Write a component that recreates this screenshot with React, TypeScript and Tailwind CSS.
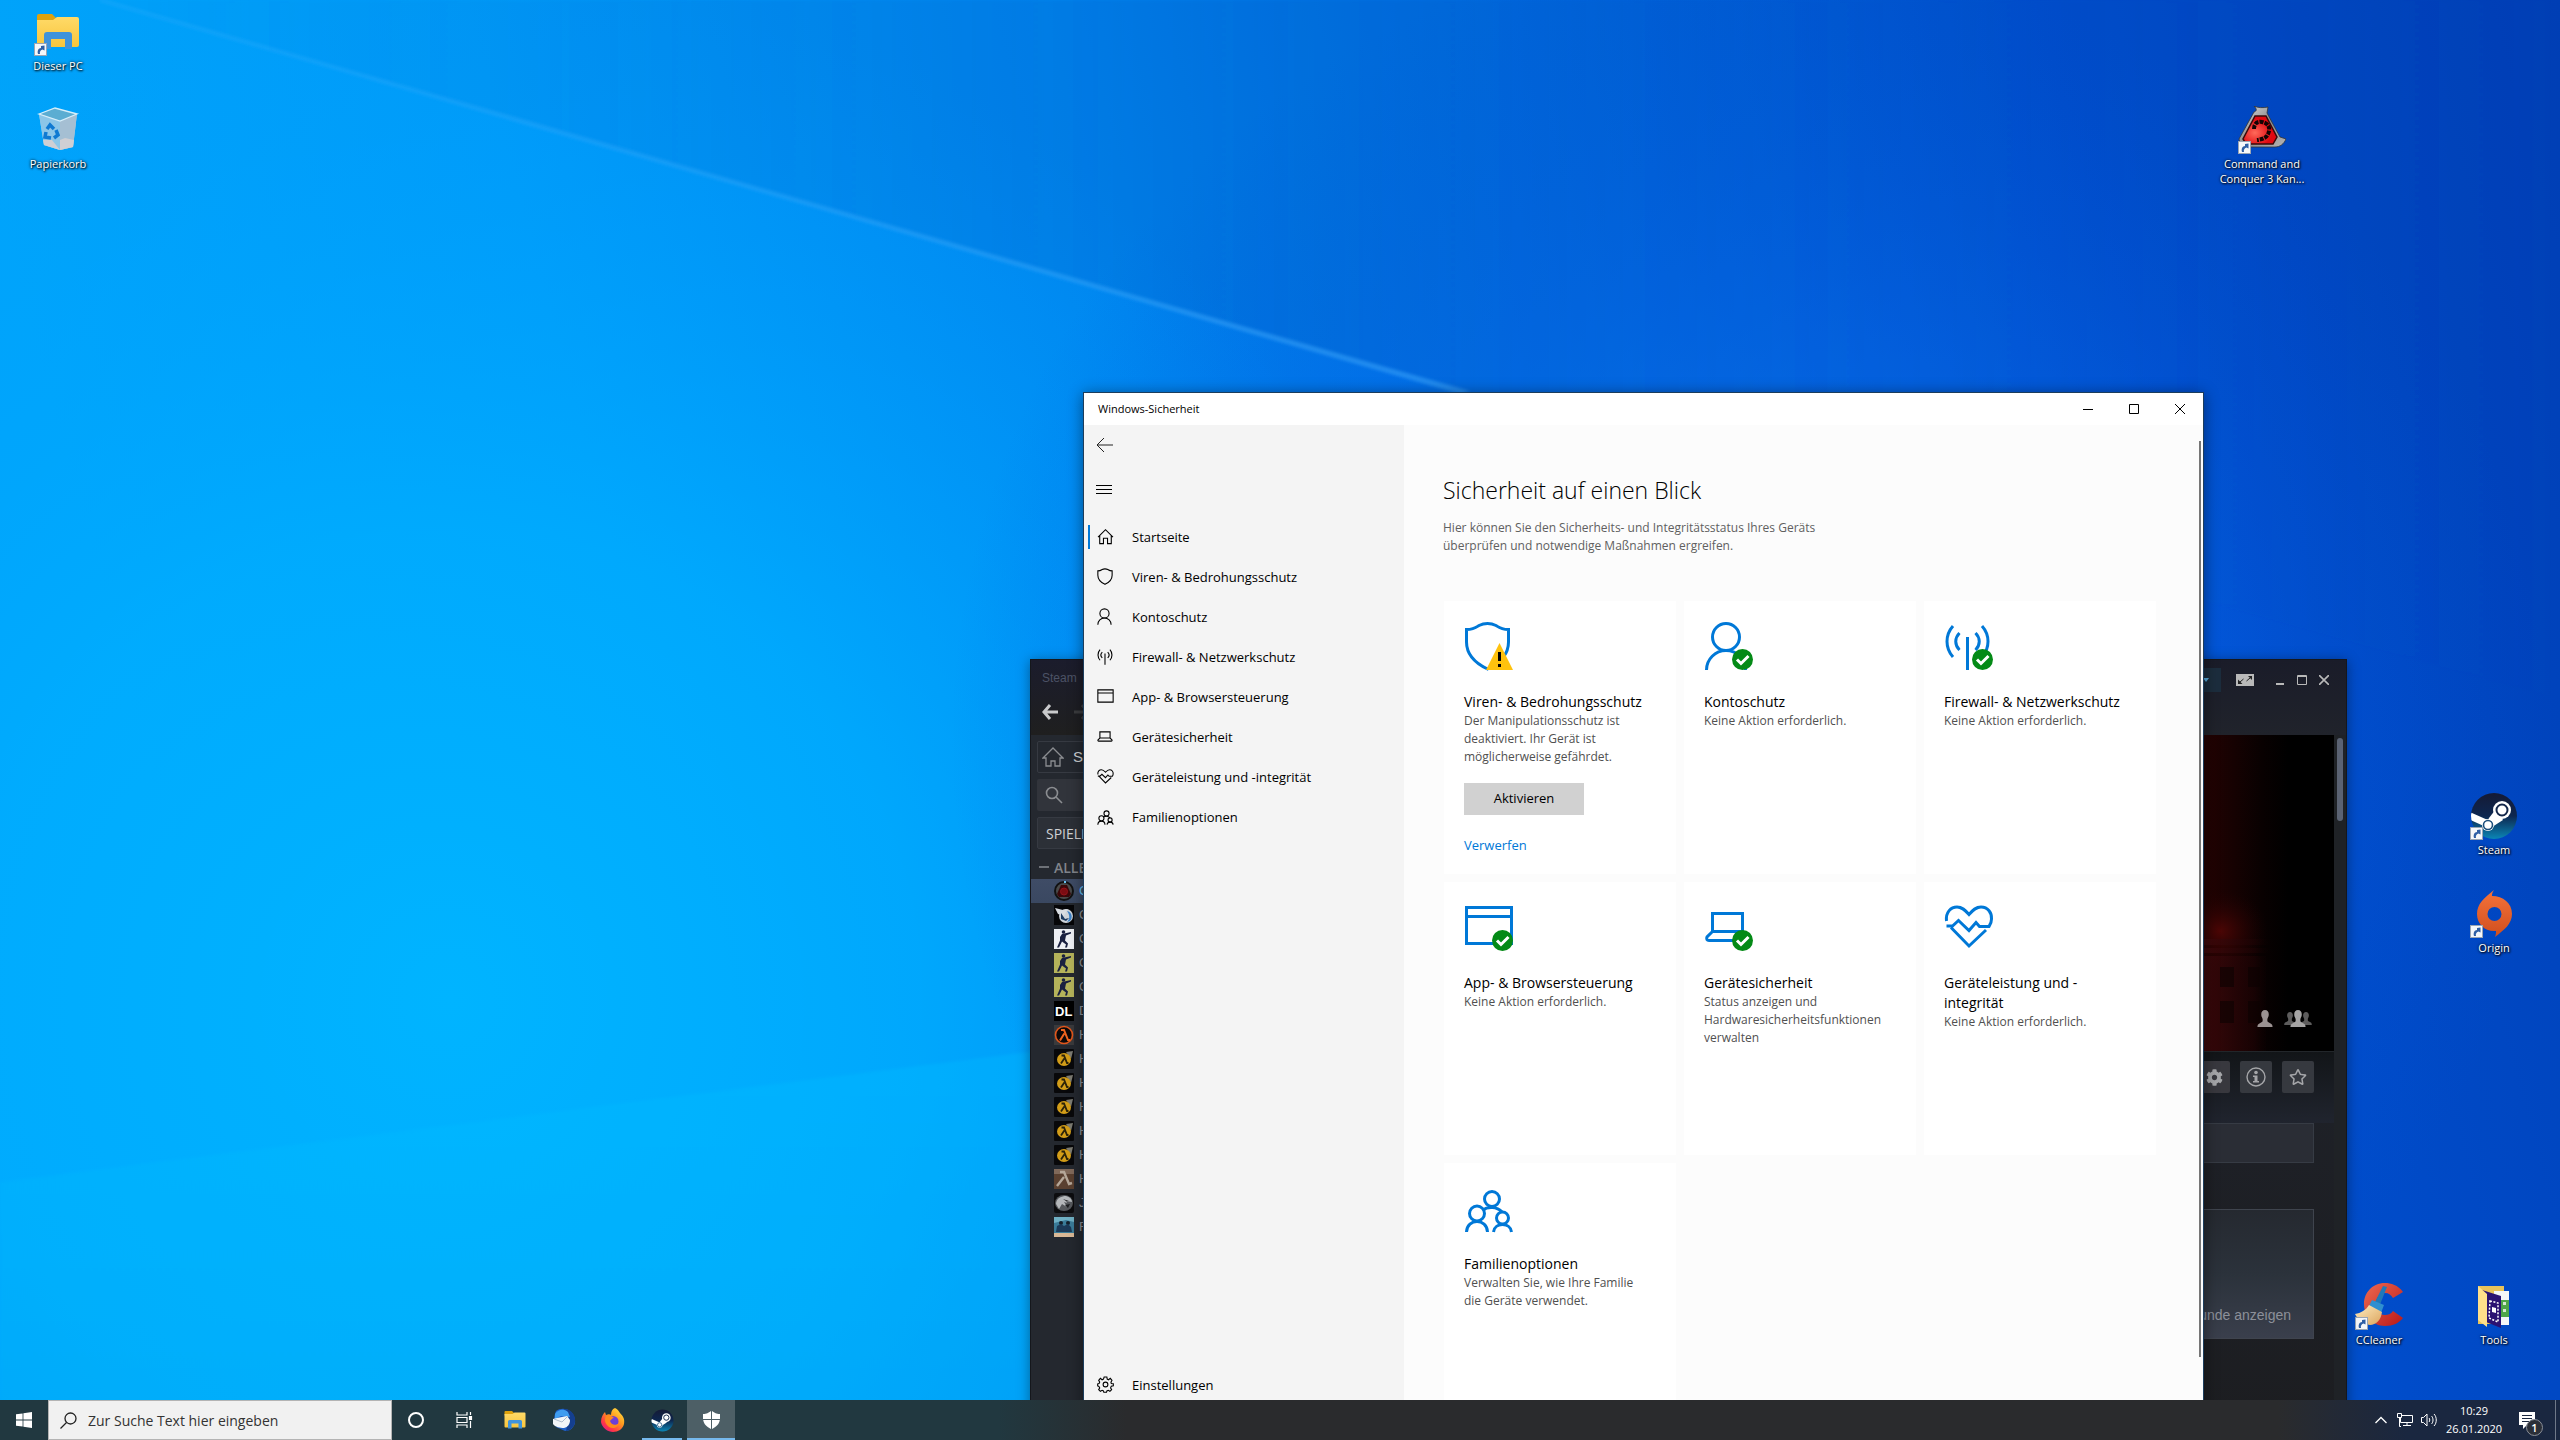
import { FaCog, FaRegStar } from "react-icons/fa";

interface IIcon {
  className?: string;
}

interface IDesktopIcon {
  label: string;
  position: string;
  shortcut?: boolean;
  children: React.ReactNode;
}

interface INavItem {
  label: string;
  active?: boolean;
  children: React.ReactNode;
}

interface ICard {
  title: string;
  text: string;
  icon: React.ReactNode;
  children?: React.ReactNode;
}

interface ITaskButton {
  label: string;
  state?: "running" | "active";
  children: React.ReactNode;
}

/* ---------- wallpaper ---------- */

const Wallpaper: React.FC = () => (
  <svg
    className="absolute inset-0 h-full w-full"
    viewBox="0 0 2560 1440"
    preserveAspectRatio="none"
    aria-hidden="true"
  >
    <defs>
      <linearGradient id="sky" x1="0" y1="0.15" x2="1" y2="0">
        <stop offset="0" stopColor="#00a4fa" />
        <stop offset="0.2" stopColor="#009af8" />
        <stop offset="0.42" stopColor="#0084ee" />
        <stop offset="0.6" stopColor="#0068de" />
        <stop offset="0.8" stopColor="#004cca" />
        <stop offset="1" stopColor="#003eb4" />
      </linearGradient>
      <radialGradient
        id="lowerLeft"
        gradientUnits="userSpaceOnUse"
        cx="450"
        cy="1000"
        r="1050"
      >
        <stop offset="0" stopColor="#00b4ff" />
        <stop offset="0.45" stopColor="#00aeff" stopOpacity="0.75" />
        <stop offset="1" stopColor="#009cff" stopOpacity="0" />
      </radialGradient>
      <radialGradient
        id="glow"
        gradientUnits="userSpaceOnUse"
        cx="1750"
        cy="740"
        r="800"
      >
        <stop offset="0" stopColor="#1a8cff" stopOpacity="0.8" />
        <stop offset="0.55" stopColor="#0668f0" stopOpacity="0.4" />
        <stop offset="1" stopColor="#0050d8" stopOpacity="0" />
      </radialGradient>
      <linearGradient id="beam" x1="0" y1="0" x2="1" y2="0">
        <stop offset="0" stopColor="#3fb4ff" stopOpacity="0.2" />
        <stop offset="1" stopColor="#3faaff" stopOpacity="0.5" />
      </linearGradient>
      <linearGradient id="above" x1="0" y1="0" x2="1" y2="0">
        <stop offset="0" stopColor="#0060c0" stopOpacity="0.02" />
        <stop offset="0.5" stopColor="#0058c0" stopOpacity="0.26" />
        <stop offset="1" stopColor="#0048c0" stopOpacity="0" />
      </linearGradient>
      <linearGradient id="floor" x1="0" y1="0" x2="0" y2="1">
        <stop offset="0" stopColor="#00c0ff" stopOpacity="0.28" />
        <stop offset="1" stopColor="#00b0f0" stopOpacity="0.28" />
      </linearGradient>
      <filter id="soft">
        <feGaussianBlur stdDeviation="1.500" />
      </filter>
    </defs>
    <rect width="2560" height="1440" fill="url(#sky)" />
    <rect width="2560" height="1440" fill="url(#lowerLeft)" />
    <rect width="2560" height="1440" fill="url(#glow)" />
    <path d="M100 0L1460 392L2560 700V0Z" fill="url(#above)" filter="url(#soft)" />
    <path
      d="M100 -2L1470 391L1460 394L100 2Z"
      fill="url(#beam)"
      filter="url(#soft)"
    />
    <path
      d="M0 1182L1060 1048V1440H0Z"
      fill="url(#floor)"
      filter="url(#soft)"
    />
  </svg>
);

/* ---------- desktop icons ---------- */

const ShortcutArrow: React.FC = () => (
  <svg
    className="absolute bottom-0 left-0"
    width="13"
    height="13"
    viewBox="0 0 13 13"
    aria-hidden="true"
  >
    <rect x="0.5" y="0.5" width="12" height="12" fill="#f5f7fa" stroke="#9aa5b4" />
    <path
      d="M4 11C3 7.500 4.500 5.300 7 5V3L10.500 2.500V7.500L8.500 6.500C6 7.500 5.500 9 6 11Z"
      fill="#2f5fa5"
    />
  </svg>
);

const DesktopIcon: React.FC<IDesktopIcon> = ({
  label,
  position,
  shortcut,
  children,
}) => (
  <a
    href="#"
    className={`absolute flex w-24 flex-col items-center text-center ${position}`}
  >
    <span className="relative mb-0.5 block h-12 w-12">
      {children}
      {shortcut && <ShortcutArrow />}
    </span>
    <span className="text-[11px] leading-[15px] text-white [text-shadow:1px_1px_2px_#000,0_0_3px_#000]">
      {label}
    </span>
  </a>
);

const FolderArt: React.FC<IIcon> = ({ className }) => (
  <svg className={className} viewBox="0 0 48 48" aria-hidden="true">
    <defs>
      <linearGradient id="folder" x1="0" y1="0" x2="0" y2="1">
        <stop offset="0" stopColor="#ffda68" />
        <stop offset="1" stopColor="#f8c53c" />
      </linearGradient>
    </defs>
    <path d="M3 8a2 2 0 0 1 2-2h13l4 4v5H3Z" fill="#dfa20c" />
    <path d="M3 12h16l4-3h20a2 2 0 0 1 2 2v26a2 2 0 0 1-2 2H5a2 2 0 0 1-2-2Z" fill="url(#folder)" />
    <path d="M10 41V27a3 3 0 0 1 3-3h22a3 3 0 0 1 3 3v14h-7V31H17v10Z" fill="#3f93dc" />
  </svg>
);

const BinArt: React.FC = () => (
  <svg viewBox="0 0 48 48" aria-hidden="true">
    <path d="M5 8L21 2l22 6-4 33-13 3-16-5Z" fill="#9fcfea" />
    <path d="M5 8l21 7v29l-16-5Z" fill="#8cc6e8" />
    <path d="M26 15l17-7-4 33-13 3Z" fill="#a5bfd3" />
    <path d="M9 34l9 0 8 10-16-5ZM40 34l-1 7-13 3V34l5-2Z" fill="#cfcfd4" />
    <path d="M5 8L21 2l22 6-17 7Z" fill="#5badd2" stroke="#d6eefa" strokeWidth="1.300" />
    <g fill="none" stroke="#0f7ad2" strokeWidth="3.500">
      <path d="M13 23l3-4 4 4" />
      <path d="M22 24l2 5-4 3" />
      <path d="M17 32l-6-1 1-5" />
    </g>
  </svg>
);

const ScorpionArt: React.FC = () => (
  <svg viewBox="0 0 48 48" aria-hidden="true">
    <defs>
      <linearGradient id="metal" x1="0" y1="0" x2="1" y2="1">
        <stop offset="0" stopColor="#e4e4e4" />
        <stop offset="0.5" stopColor="#8a8a8a" />
        <stop offset="1" stopColor="#b4b4b4" />
      </linearGradient>
      <radialGradient id="redCore" cx="0.35" cy="0.6">
        <stop offset="0" stopColor="#ff6a5a" />
        <stop offset="1" stopColor="#e00810" />
      </radialGradient>
    </defs>
    <path
      d="M16 0C20 2 25 2 30 1L29 7L42 31L48 33C46 38 42 41 37 41H3L1 33L16 6C19 5 19 3 16 0Z"
      fill="url(#metal)"
      stroke="#333"
      strokeWidth="0.800"
    />
    <path d="M17 10H28L39 31L35 38H8L5 33Z" fill="url(#redCore)" stroke="#3a0a0a" strokeWidth="1.500" />
    <path
      d="M16 23C16 17 20 15 24 16C29 17 32 20 31 25C30 31 26 33 19 34"
      fill="none"
      stroke="#140404"
      strokeWidth="4"
      strokeDasharray="4 1"
    />
  </svg>
);

const SteamArt: React.FC<IIcon> = ({ className }) => (
  <svg className={className} viewBox="0 0 48 48" aria-hidden="true">
    <defs>
      <linearGradient id="steamBg" x1="0" y1="0" x2="0" y2="1">
        <stop offset="0" stopColor="#151a35" />
        <stop offset="0.5" stopColor="#0d2750" />
        <stop offset="1" stopColor="#0b86b6" />
      </linearGradient>
      <clipPath id="steamClip">
        <circle cx="24" cy="24" r="23" />
      </clipPath>
    </defs>
    <circle cx="24" cy="24" r="23" fill="url(#steamBg)" />
    <g clipPath="url(#steamClip)">
      <path d="M0 24l18 8" stroke="#fff" strokeWidth="7" />
      <path d="M15 34l4 3 14-9-7-11-7 9Z" fill="#fff" />
      <circle cx="18" cy="33" r="6" fill="#fff" />
      <circle cx="18" cy="33" r="4.500" fill="none" stroke="#1c4f7c" strokeWidth="1.600" />
      <circle cx="32" cy="18" r="9" fill="#fff" />
      <circle cx="32" cy="18" r="5.500" fill="#fff" stroke="#13264a" strokeWidth="2" />
    </g>
  </svg>
);

const OriginArt: React.FC = () => (
  <svg viewBox="0 0 48 48" aria-hidden="true">
    <defs>
      <linearGradient id="origin" x1="0" y1="0" x2="0" y2="1">
        <stop offset="0" stopColor="#f5733a" />
        <stop offset="1" stopColor="#d04e1e" />
      </linearGradient>
    </defs>
    <path
      d="M24 0c-2 3-2 4-2 6 11 0 20 7 20 18 0 10-8 16-17 23 1-3 1-4 1-6-11 1-19-7-19-17C7 14 14 8 24 0Zm0.500 17a7 7 0 1 0 0 14 7 7 0 0 0 0-14Z"
      fill="url(#origin)"
      fillRule="evenodd"
    />
  </svg>
);

const CCleanerArt: React.FC = () => (
  <svg viewBox="0 0 48 48" aria-hidden="true">
    <defs>
      <linearGradient id="ccRed" x1="0" y1="0" x2="1" y2="1">
        <stop offset="0" stopColor="#ef6a50" />
        <stop offset="1" stopColor="#b81818" />
      </linearGradient>
      <linearGradient id="broom" x1="0" y1="0" x2="1" y2="1">
        <stop offset="0" stopColor="#ffefc4" />
        <stop offset="1" stopColor="#dca45c" />
      </linearGradient>
    </defs>
    <path
      d="M48 10C43 3 36 1 30 1 17 1 9 11 9 22s8 22 21 22c8 0 14-3 18-8l-10-7c-2 3-5 4-8 4-6 0-9-5-9-11s3-11 9-11c4 0 6 2 8 5Z"
      fill="url(#ccRed)"
    />
    <path d="M28 4l4 1-8 20-5-3Z" fill="#2079b8" />
    <path d="M17 18l12 5-3 8-12-7Z" fill="#2f8fd0" />
    <path d="M14 23l13 7c-1 8-6 13-12 13-6-1-12-5-15-11 6-1 11-4 14-9Z" fill="url(#broom)" />
  </svg>
);

const ToolsArt: React.FC = () => (
  <svg viewBox="0 0 48 48" aria-hidden="true">
    <path d="M8 4h26v38H8Z" fill="#e8c35a" />
    <path d="M24 9h15v34H24Z" fill="#f4f6f8" />
    <path d="M29 18h10v17H29Z" fill="#4fa548" />
    <path d="M33 20h3v3h-3ZM33 27h3v3h-3Z" fill="#d5e8d2" />
    <path d="M12 8l19 6v32l-15-6Z" fill="#2b1272" />
    <path d="M20 19l8 2v19l-9-4Z" fill="none" stroke="#fff" strokeWidth="1.500" strokeDasharray="2 1.500" />
    <path d="M22 25l4 1v5l-4-1Z" fill="#fff" />
    <path d="M8 4l9 8v33l-9-7Z" fill="#ffe08a" />
  </svg>
);

/* ---------- line icons of the security window ---------- */

const Check: React.FC = () => (
  <g>
    <circle cx="38.500" cy="38.500" r="10.500" fill="#048a16" stroke="none" />
    <path d="M33 38.500l4 4 7.500-7.500" stroke="#fff" strokeWidth="3" />
  </g>
);

const Warning: React.FC = () => (
  <g stroke="none">
    <path d="M35.500 22L49 49H22Z" fill="#ffc20e" />
    <path d="M34 31h3v9h-3ZM34 43h3v3h-3Z" fill="#000" />
  </g>
);

interface ILineIcon {
  shape: keyof typeof SHAPES;
  large?: boolean;
  badge?: React.ReactNode;
}

const SHAPES = {
  home: <path d="M3 27L25 5l22 22M8 23v23h11V30h12v16h11V23" />,
  shield: (
    <path d="M2.500 8.500C10 8.500 12 6.500 15 4.500 18 3 21 2.500 23.500 2.500S29 3 32 4.500C35 6.500 37 8.500 44.500 8.500V21C44.500 35 34 43 23.500 48 13 43 2.500 35 2.500 21Z" />
  ),
  account: (
    <>
      <circle cx="22" cy="16" r="13.500" />
      <path d="M2.500 49A19.500 19.500 0 0 1 41.500 49" />
    </>
  ),
  firewall: (
    <>
      <path d="M23.500 16V49" />
      <path d="M9 5C1 14 1 27 9 36M38 5c8 9 8 22 0 31" />
      <path d="M15.500 12c-5 5-5 12 0 17M31.500 12c5 5 5 12 0 17" />
    </>
  ),
  browser: <path d="M2.500 5.500h45v36h-45ZM2.500 14.500h45" />,
  device: (
    <path d="M8.500 29.500v-18h30v18ZM8.500 29.500L3 35c-1 2 0 3.500 2 3.500h37c2 0 3-1.500 2-3.500l-5.500-5.500" />
  ),
  health: (
    <path d="M2.500 19C1.500 10 7 5 13 5c5 0 8 3 12 7.500C29 8 32 5 37 5c7 0 11 6 10.500 12 0 3-1 5.500-2.500 7.500H35.500L32 20.500l-7 8-10.500-10L8.500 24H2.500M7 25.500L25 44 42 28" />
  ),
  family: (
    <>
      <circle cx="28" cy="16" r="7.500" />
      <circle cx="13" cy="30.500" r="7.500" />
      <circle cx="38.500" cy="35" r="6" />
      <path d="M2.500 49C3 35 23 35 23.500 49M29.500 49c1-10 17-10 18 0M19 27c4-3.500 14-4 19 2" />
    </>
  ),
  settings: (
    <>
      <circle cx="25" cy="25" r="7" />
      <path d="M21 3h8l1 6 4 2 5-4 5 6-3 5 1 4 6 1v6l-6 1-2 5 3 5-5 5-5-3-4 2-1 4h-8l-1-4-4-2-5 3-5-5 3-5-2-4-4-2v-6l4-1 2-4-3-5 5-6 5 4 4-2Z" />
    </>
  ),
};

const LineIcon: React.FC<ILineIcon> = ({ shape, large, badge }) => (
  <svg
    className={large ? "h-[50px] w-[50px] text-[#0078d7]" : "h-[17px] w-[17px] shrink-0"}
    viewBox="0 0 50 50"
    fill="none"
    stroke="currentColor"
    strokeWidth={large ? 3 : 3.2}
    aria-hidden="true"
  >
    {SHAPES[shape]}
    {badge}
  </svg>
);

const NavItem: React.FC<INavItem> = ({ label, active, children }) => (
  <a href="#" className="flex h-10 items-center px-1 text-[13px] text-black">
    <span className={active ? "h-6 w-0.5 bg-[#0078d7]" : "h-6 w-0.5"} />
    <span className="ml-[7px] mr-[18px] pb-0.5">{children}</span>
    <span className="pt-0.5">{label}</span>
  </a>
);

const Card: React.FC<ICard> = ({ title, text, icon, children }) => (
  <section className="h-[273px] bg-white pl-5 pr-7 pt-5">
    {icon}
    <h2 className="mt-[21px] whitespace-pre-line text-[14px] leading-5 text-black">
      {title}
    </h2>
    <p className="text-[12px] leading-[18px] text-[#505050]">{text}</p>
    {children}
  </section>
);

const SecurityWindow: React.FC = () => (
  <main className="absolute bottom-6 left-[1083px] right-[356px] top-[392px] flex flex-col border border-[#1c3d5c] bg-[#fcfcfc] shadow-[0_2px_14px_rgba(0,0,0,0.45)]">
    <header className="flex h-8 shrink-0 items-center bg-white pl-3.5">
      <span className="flex-1 text-[11px] text-black">Windows-Sicherheit</span>
      <button aria-label="Minimieren" className="flex h-8 w-[46px] items-center justify-center">
        <svg width="10" height="10" stroke="#000" aria-hidden="true">
          <path d="M0 5.500h10" />
        </svg>
      </button>
      <button aria-label="Maximieren" className="flex h-8 w-[46px] items-center justify-center">
        <svg width="10" height="10" fill="none" stroke="#000" aria-hidden="true">
          <path d="M0.500 0.500h9v9h-9Z" />
        </svg>
      </button>
      <button aria-label="Schließen" className="flex h-8 w-[46px] items-center justify-center">
        <svg width="10" height="10" stroke="#000" aria-hidden="true">
          <path d="M0 0l10 10M10 0L0 10" />
        </svg>
      </button>
    </header>
    <div className="flex min-h-0 flex-1">
      <nav className="flex w-80 shrink-0 flex-col bg-[#f4f4f4] pb-2.5">
        <button aria-label="Zurück" className="flex h-10 w-10 items-center pl-3">
          <svg width="17" height="16" fill="none" stroke="#222" aria-hidden="true">
            <path d="M8 1L1 8l7 7M1 8h16" />
          </svg>
        </button>
        <button aria-label="Navigation" className="mb-2 mt-1 flex h-10 w-10 items-center pl-3">
          <svg width="16" height="9" stroke="#000" aria-hidden="true">
            <path d="M0 0.500h16M0 4.500h16M0 8.500h16" />
          </svg>
        </button>
        <NavItem label="Startseite" active>
          <LineIcon shape="home" />
        </NavItem>
        <NavItem label="Viren- & Bedrohungsschutz">
          <LineIcon shape="shield" />
        </NavItem>
        <NavItem label="Kontoschutz">
          <LineIcon shape="account" />
        </NavItem>
        <NavItem label="Firewall- & Netzwerkschutz">
          <LineIcon shape="firewall" />
        </NavItem>
        <NavItem label="App- & Browsersteuerung">
          <LineIcon shape="browser" />
        </NavItem>
        <NavItem label="Gerätesicherheit">
          <LineIcon shape="device" />
        </NavItem>
        <NavItem label="Geräteleistung und -integrität">
          <LineIcon shape="health" />
        </NavItem>
        <NavItem label="Familienoptionen">
          <LineIcon shape="family" />
        </NavItem>
        <div className="mt-auto">
          <NavItem label="Einstellungen">
            <LineIcon shape="settings" />
          </NavItem>
        </div>
      </nav>
      <div className="min-w-0 flex-1 overflow-hidden pl-[39px] pt-[49px]">
        <h1 className="text-[23px] font-light leading-8 text-black">
          Sicherheit auf einen Blick
        </h1>
        <p className="mt-[13px] w-[390px] text-[12px] leading-[18px] text-[#606060]">
          Hier können Sie den Sicherheits- und Integritätsstatus Ihres Geräts
          überprüfen und notwendige Maßnahmen ergreifen.
        </p>
        <div className="ml-px mr-10 mt-[46px] grid grid-cols-[repeat(auto-fill,232px)] gap-2">
          <Card
            title="Viren- & Bedrohungsschutz"
            text="Der Manipulationsschutz ist deaktiviert. Ihr Gerät ist möglicherweise gefährdet."
            icon={<LineIcon shape="shield" large badge={<Warning />} />}
          >
            <button className="mt-[17px] block h-8 w-[120px] bg-[#d1d1d1] text-[13px] text-black">
              Aktivieren
            </button>
            <a href="#" className="mt-5 inline-block text-[13px] leading-5 text-[#0078d7]">
              Verwerfen
            </a>
          </Card>
          <Card
            title="Kontoschutz"
            text="Keine Aktion erforderlich."
            icon={<LineIcon shape="account" large badge={<Check />} />}
          />
          <Card
            title="Firewall- & Netzwerkschutz"
            text="Keine Aktion erforderlich."
            icon={<LineIcon shape="firewall" large badge={<Check />} />}
          />
          <Card
            title="App- & Browsersteuerung"
            text="Keine Aktion erforderlich."
            icon={<LineIcon shape="browser" large badge={<Check />} />}
          />
          <Card
            title="Gerätesicherheit"
            text="Status anzeigen und Hardwaresicherheitsfunktionen verwalten"
            icon={<LineIcon shape="device" large badge={<Check />} />}
          />
          <Card
            title={"Geräteleistung und -\nintegrität"}
            text="Keine Aktion erforderlich."
            icon={<LineIcon shape="health" large />}
          />
          <Card
            title="Familienoptionen"
            text="Verwalten Sie, wie Ihre Familie die Geräte verwendet."
            icon={<LineIcon shape="family" large />}
          />
        </div>
      </div>
      <div className="mb-[58px] mr-0.5 mt-4 w-0.5 bg-[#767676]" />
    </div>
  </main>
);

/* ---------- steam window ---------- */

const Soldier: React.FC<{ bg: string }> = ({ bg }) => (
  <svg width="20" height="20" viewBox="0 0 20 20" aria-hidden="true">
    <rect width="20" height="20" fill={bg} />
    <circle cx="9.500" cy="3" r="1.800" fill="#1a2040" />
    <path d="M8 5l9-2v1.500l-5 2-1 5 3 3-1 4h-2l1-3-4-3-3 6H3l3-7V8Z" fill="#1a2040" />
  </svg>
);

const Lambda: React.FC = () => (
  <svg width="20" height="20" viewBox="0 0 20 20" aria-hidden="true">
    <rect width="20" height="20" rx="1" fill="#08080a" />
    <path d="M12 3l7-1-2 8Z" fill="#7c7b72" />
    <ellipse cx="10" cy="10.500" rx="7" ry="6.500" fill="#d39d18" />
    <path d="M7.500 6.500h2.500l3 7.500h1.500M10.300 9.500L7 14.500" fill="none" stroke="#2c2308" strokeWidth="1.800" />
  </svg>
);

const GAMES = [
  {
    initial: "C",
    icon: (
      <svg width="20" height="20" viewBox="0 0 20 20" aria-hidden="true">
        <circle cx="10" cy="10" r="9" fill="#4a4a4a" stroke="#111" strokeWidth="2" />
        <path d="M7 4h6l4 9-2 3H5l-2-3Z" fill="#3c080a" />
        <circle cx="10" cy="10.500" r="3.500" fill="#7c0c12" stroke="#94141a" />
        <path d="M10 0h2v2h-2Z" fill="#66c0f4" />
      </svg>
    ),
  },
  {
    initial: "C",
    icon: (
      <svg width="20" height="20" viewBox="0 0 20 20" aria-hidden="true">
        <rect width="20" height="20" fill="#060608" />
        <circle cx="12" cy="11" r="7" fill="#cfd4da" />
        <path d="M1 3l8 2 5-1-2 3-2 4-6-2Z" fill="#d9dde2" />
        <path d="M13 6c5 1 6 7 3 10l-3 1c3-3 3-7 0-11Z" fill="#3c82c8" />
        <path d="M7 8l4 6 4-1-3 3-5-2Z" fill="#1c3a60" />
      </svg>
    ),
  },
  { initial: "C", icon: <Soldier bg="#eef0f4" /> },
  { initial: "C", icon: <Soldier bg="#b5b35a" /> },
  { initial: "C", icon: <Soldier bg="#b5b35a" /> },
  {
    initial: "D",
    icon: (
      <span className="flex h-5 w-5 items-center bg-black pl-px text-[13px] font-bold leading-none text-white">
        DL
      </span>
    ),
  },
  {
    initial: "H",
    icon: (
      <svg width="20" height="20" viewBox="0 0 20 20" aria-hidden="true">
        <rect width="20" height="20" fill="#3a3a3c" />
        <circle cx="10" cy="10" r="8.500" fill="#0c0808" stroke="#e0561c" strokeWidth="1.600" />
        <path d="M7 5h3l4 10h2M10.300 8.500L6 15.500" fill="none" stroke="#f0641e" strokeWidth="2" />
      </svg>
    ),
  },
  { initial: "H", icon: <Lambda /> },
  { initial: "H", icon: <Lambda /> },
  { initial: "H", icon: <Lambda /> },
  { initial: "H", icon: <Lambda /> },
  { initial: "H", icon: <Lambda /> },
  {
    initial: "H",
    icon: (
      <svg width="20" height="20" viewBox="0 0 20 20" aria-hidden="true">
        <rect width="20" height="20" fill="#5a4030" />
        <path d="M0 0h20v5H0Z" fill="#80695a" />
        <path d="M6 3h4l5 12 3-1M10 8L3 17" fill="none" stroke="#b5a799" strokeWidth="2.400" />
      </svg>
    ),
  },
  {
    initial: "J",
    icon: (
      <svg width="20" height="20" viewBox="0 0 20 20" aria-hidden="true">
        <rect width="20" height="20" rx="2" fill="#0c0c0e" />
        <ellipse cx="10" cy="10" rx="9" ry="8" fill="#55585c" />
        <path d="M2 11c0-6 6-8 10-8 4 1 6 3 6 6l-6-1 1 2-3-1 3 5-5-3-3 5Z" fill="#b4b7ba" />
        <path d="M9 6l6 2-3 0ZM11 12l5-1-2 4Z" fill="#1c1e20" />
      </svg>
    ),
  },
  {
    initial: "F",
    icon: (
      <svg width="20" height="20" viewBox="0 0 20 20" aria-hidden="true">
        <rect width="20" height="20" fill="#3a7b98" />
        <path d="M0 0h20v5L12 3 0 6Z" fill="#6fb0c4" />
        <path d="M0 16h20v4H0Z" fill="#d9b896" />
        <circle cx="7" cy="6" r="2" fill="#15202c" />
        <circle cx="14" cy="6" r="2" fill="#15202c" />
        <path d="M3 9l4-2 3 2 4-2 3 3 1 5H2Z" fill="#1c3a58" />
      </svg>
    ),
  },
];

const Person: React.FC<IIcon> = ({ className }) => (
  <svg className={className} viewBox="0 0 16 18" fill="currentColor" aria-hidden="true">
    <path d="M8 0c2.500 0 4 2 4 4.500S11 8 10.500 9.500v2c0 1 1 1.500 3 2.500 2 .8 2.500 2 2.500 4H0c0-2 .5-3.200 2.500-4 2-1 3-1.500 3-2.500v-2C5 8 4 7 4 4.500S5.500 0 8 0Z" />
  </svg>
);

const SteamWindow: React.FC = () => (
  <section className="absolute -bottom-8 left-[1030px] right-[213px] top-[659px] flex flex-col border border-[#15171c] bg-[#24282f] font-['Liberation_Sans',sans-serif] shadow-[0_2px_12px_rgba(0,0,0,0.4)]">
    <header className="flex h-[75px] shrink-0 justify-between bg-linear-to-b from-[#1a1c29] to-[#20232b]">
      <div className="w-52 bg-linear-to-b from-[#1b1c2c] to-[#1f1f1f] pl-[11px] pt-2.5">
        <div className="text-[12px] leading-4 text-[#4c5366]">Steam</div>
        <div className="flex gap-4 pt-[18px]">
          <button aria-label="Zurück">
            <svg width="16" height="16" fill="none" stroke="#c9cacc" strokeWidth="3" aria-hidden="true">
              <path d="M8 1L2 8l6 7M2 8h14" />
            </svg>
          </button>
          <button aria-label="Vorwärts">
            <svg width="16" height="16" fill="none" stroke="#3b3c3f" strokeWidth="3" aria-hidden="true">
              <path d="M8 1l6 7-6 7M14 8H0" />
            </svg>
          </button>
        </div>
      </div>
      <div className="flex h-8 pr-[17px] pt-2">
        <button
          aria-label="Konto"
          className="mr-[15px] flex h-6 w-10 items-center justify-end bg-[#1c2d3d] pr-3"
        >
          <svg width="6" height="4" fill="#56a8d8" aria-hidden="true">
            <path d="M0 0h6L3 4Z" />
          </svg>
        </button>
        <button aria-label="Big Picture" className="mr-[21px]">
          <svg width="18" height="12" viewBox="0 0 18 12" aria-hidden="true">
            <rect width="18" height="12" fill="#b9b9b9" />
            <path d="M2 5.500V10H6.500ZM12 2H16V6Z" fill="#222" />
            <path d="M4 8l3.500-3M14 4l-3.500 3" stroke="#222" />
          </svg>
        </button>
        <div className="flex items-center gap-3">
          <button aria-label="Minimieren">
            <svg width="10" height="10" stroke="#b9b9b9" strokeWidth="2" aria-hidden="true">
              <path d="M1 9h8" />
            </svg>
          </button>
          <button aria-label="Maximieren">
            <svg width="10" height="10" fill="none" stroke="#b9b9b9" aria-hidden="true">
              <path d="M0.500 0.500h9v9h-9ZM0 1.500h10" />
            </svg>
          </button>
          <button aria-label="Schließen">
            <svg width="10" height="10" stroke="#b9b9b9" strokeWidth="1.600" aria-hidden="true">
              <path d="M0 0l10 10M10 0L0 10" />
            </svg>
          </button>
        </div>
      </div>
    </header>
    <div className="flex min-h-0 flex-1">
      <aside className="w-52 shrink-0 bg-[#24282f] pt-1.5">
        <div className="ml-1.5 flex flex-col gap-1.5 text-[15px] text-[#d0d2d5]">
          <a href="#" className="flex h-8 items-center gap-2 rounded-xs border border-[#363a42] pl-1">
            <svg width="22" height="20" fill="none" stroke="#8b8d91" strokeWidth="1.300" aria-hidden="true">
              <path d="M1 11L11 1l10 10h-3v8h-5v-5H9v5H4v-8Z" />
            </svg>
            <span className="pl-px">S</span>
          </a>
          <div className="flex h-8 items-center rounded-xs bg-[#31343b] pl-2">
            <svg width="18" height="18" fill="none" stroke="#8b8d91" strokeWidth="1.600" aria-hidden="true">
              <circle cx="7" cy="7" r="5.500" />
              <path d="M11 11l6 6" />
            </svg>
          </div>
          <div className="flex h-8 items-center rounded-xs border border-[#363a42] bg-[#2c3037] pl-2 font-['Open_Sans',sans-serif] text-[14px] font-medium">
            SPIELE
          </div>
        </div>
        <div className="flex h-[30px] items-center gap-1 pl-2 pt-1.5 font-['Open_Sans',sans-serif] text-[14px] font-semibold text-[#80848b]">
          <span className="h-0.5 w-2.5 bg-[#6d7177]" />
          <span className="pl-px">ALLE</span>
        </div>
        <ul>
          {GAMES.map((game, i) => (
            <li
              key={i}
              className={
                i === 0
                  ? "flex h-6 items-center gap-1 bg-linear-to-b from-[#3f4c66] to-[#3a4861] pl-[23px] text-[13px] text-[#66c0f4]"
                  : "flex h-6 items-center gap-1 pl-[23px] text-[13px] text-[#8f9297]"
              }
            >
              <span className="block h-5 w-5">{game.icon}</span>
              <span className="pl-px">{game.initial}</span>
            </li>
          ))}
        </ul>
      </aside>
      <div className="flex min-w-0 flex-1 flex-col bg-linear-to-b from-[#20242e] to-[#1c1d20]">
        <div className="relative flex h-[316px] shrink-0 items-end justify-end gap-[11px] bg-black pb-6 pr-[22px]">
          <svg className="absolute right-0 top-0 h-full w-[130px]" viewBox="0 0 130 316" preserveAspectRatio="none" aria-hidden="true">
            <defs>
              <linearGradient id="haze" x1="0" y1="0" x2="1" y2="0">
                <stop offset="0" stopColor="#240303" />
                <stop offset="0.45" stopColor="#080101" />
                <stop offset="0.65" stopColor="#000" />
              </linearGradient>
              <linearGradient id="ruin" x1="0" y1="0" x2="1" y2="0">
                <stop offset="0" stopColor="#420a0d" />
                <stop offset="0.7" stopColor="#1c0304" />
                <stop offset="1" stopColor="#000" stopOpacity="0" />
              </linearGradient>
              <radialGradient id="ember">
                <stop offset="0" stopColor="#4c0605" />
                <stop offset="1" stopColor="#200303" stopOpacity="0" />
              </radialGradient>
            </defs>
            <rect width="130" height="316" fill="url(#haze)" />
            <ellipse cx="16" cy="196" rx="48" ry="42" fill="url(#ember)" />
            <path d="M0 204h72v6H0ZM0 213h68v5H0ZM0 221h62v95H0Z" fill="url(#ruin)" opacity="0.700" />
            <path d="M16 232h14v20H16ZM44 232h12v20H44ZM16 266h14v22H16ZM44 266h12v22H44Z" fill="#0c0102" opacity="0.600" />
          </svg>
          <Person className="relative h-[17px] w-4 text-[#9b9292]" />
          <span className="relative flex items-center text-[#5d5c5c]">
            <Person className="h-[13px] w-3" />
            <Person className="-mx-1.5 z-10 h-[17px] w-4 text-[#a5a4a4]" />
            <Person className="h-[13px] w-3" />
          </span>
        </div>
        <div className="flex h-[72px] shrink-0 justify-end gap-2.5 border-t border-[#22262a] bg-linear-to-b from-[#121518] to-[#20242e] pr-5 pt-[9px] text-[#a5a6a9]">
          <button aria-label="Einstellungen" className="flex h-8 w-8 items-center justify-center rounded-xs bg-[#38383e]">
            <FaCog size={17} />
          </button>
          <button aria-label="Informationen" className="flex h-8 w-8 items-center justify-center rounded-xs bg-[#36393f]">
            <svg width="20" height="20" viewBox="0 0 20 20" fill="none" stroke="currentColor" strokeWidth="1.400" aria-hidden="true">
              <circle cx="10" cy="10" r="9" />
              <circle cx="10" cy="5.500" r="1.800" fill="currentColor" stroke="none" />
              <path d="M7 8.500h4.500v5.500H13v1.500H7V14h1.500v-4H7Z" fill="currentColor" stroke="none" />
            </svg>
          </button>
          <button aria-label="Favorit" className="flex h-8 w-8 items-center justify-center rounded-xs bg-[#36393f]">
            <FaRegStar size={18} />
          </button>
        </div>
        <div className="mr-5 h-10 shrink-0 border border-[#363b44] bg-[#2a2d35]" />
        <div className="mr-5 mt-[46px] flex h-[130px] shrink-0 items-end justify-end border border-[#3f444e] bg-linear-to-b from-[#252930] via-[#2b323b] to-[#3a3f4c] pb-3 pr-[22px]">
          <a href="#" className="text-[14px] text-[#8c9099]">
            Freunde anzeigen
          </a>
        </div>
      </div>
      <div className="w-3 shrink-0 bg-[#1f2226] pl-[3px] pt-[3px]">
        <div className="h-[83px] w-1.5 rounded-full bg-[#5b6373]" />
      </div>
    </div>
  </section>
);

/* ---------- taskbar ---------- */

const TaskButton: React.FC<ITaskButton> = ({ label, state, children }) => (
  <button
    aria-label={label}
    className={`relative flex h-10 w-12 items-center justify-center ${
      state === "active" ? "bg-white/20" : ""
    }`}
  >
    {children}
    {state && (
      <span
        className={`absolute bottom-0 h-0.5 bg-[#76b9ed] ${
          state === "active" ? "inset-x-0" : "inset-x-1"
        }`}
      />
    )}
  </button>
);

const Taskbar: React.FC = () => (
  <footer className="absolute inset-x-0 bottom-0 flex h-10 items-stretch bg-[linear-gradient(to_right,#213840_0%,#213840_39%,#2a2b2d_44%,#2a2b2d_89%,#1a2740_94%,#1a2740_100%)]">
    <button aria-label="Start" className="flex w-12 items-center justify-center">
      <svg width="16" height="16" viewBox="0 0 16 16" fill="#fff" aria-hidden="true">
        <path d="M0 2.300L6.600 1.400V7.600H0ZM7.400 1.300L16 0V7.600H7.400ZM0 8.400H6.600V14.600L0 13.700ZM7.400 8.400H16V16L7.400 14.700Z" />
      </svg>
    </button>
    <label className="flex w-[344px] items-center gap-[11px] border border-[#b4b4b4] bg-[#f1f1f1] pl-[11px]">
      <svg width="17" height="17" fill="none" stroke="#222" strokeWidth="1.300" aria-hidden="true">
        <circle cx="10.500" cy="6.500" r="5.500" />
        <path d="M6.500 10.500L0.500 16.500" />
      </svg>
      <input
        type="text"
        aria-label="Suche"
        placeholder="Zur Suche Text hier eingeben"
        className="min-w-0 flex-1 bg-transparent text-[14px] outline-none placeholder:text-[#333]"
      />
    </label>
    <TaskButton label="Cortana">
      <svg width="18" height="18" fill="none" stroke="#fff" strokeWidth="2" aria-hidden="true">
        <circle cx="9" cy="9" r="7" />
      </svg>
    </TaskButton>
    <TaskButton label="Aktive Anwendungen">
      <svg width="17" height="16" fill="none" stroke="#fff" strokeWidth="1.200" aria-hidden="true">
        <path d="M1 0v3h10V0M1 16v-3h10v3M1 5.500h10v5H1ZM14.500 0v3M14.500 9v7" />
        <path d="M13.500 4.500h2v3h-2Z" fill="#fff" />
      </svg>
    </TaskButton>
    <div className="ml-[3px] flex gap-px">
      <TaskButton label="Explorer">
        <FolderArt className="h-6 w-6" />
      </TaskButton>
      <TaskButton label="Thunderbird">
        <svg width="24" height="24" viewBox="0 0 24 24" aria-hidden="true">
          <path d="M4 3C8 0 14 0 18 3c5 4 7 11 3 16-2 3-5 4-8 4L4 19C1 13 2 8 4 3Z" fill="#1f5fc4" />
          <path d="M12 1c7 0 12 6 11 13-1 5-4 8-9 9l3-13Z" fill="#143f90" />
          <path d="M3 6c2-4 9-6 13-2l2 5-9-1-6 3Z" fill="#3f9cf0" />
          <path d="M1 11L5 10 15 8l3 4c0 4-2 7-6 8-4 0-9-1-11-4Z" fill="#f2f5f8" />
          <path d="M2 11l8 3 6-6" fill="none" stroke="#b0bccb" />
        </svg>
      </TaskButton>
      <TaskButton label="Firefox">
        <svg width="24" height="24" viewBox="0 0 24 24" aria-hidden="true">
          <defs>
            <linearGradient id="fox" x1="1" y1="0" x2="0.200" y2="1">
              <stop offset="0" stopColor="#fff04a" />
              <stop offset="0.450" stopColor="#ff9a1e" />
              <stop offset="0.800" stopColor="#ff3647" />
              <stop offset="1" stopColor="#e01a86" />
            </linearGradient>
          </defs>
          <path
            d="M14 0c4 2 4 4 5 5 3 3 5 6 4 11-1 5-6 8-11 8S1 20 0 14C0 9 2 6 4 4l1 3c2-1 4-1 5 0 0-3 1-6 4-7Z"
            fill="url(#fox)"
          />
          <circle cx="12" cy="13.500" r="5.500" fill="#6b3fd8" />
          <path d="M5 8c3-1 6 0 8 2-2 0-3 2-4 3 1 4 6 5 9 2-1 5-6 6-10 4-4-3-5-7-3-11Z" fill="#ff8a1c" />
        </svg>
      </TaskButton>
      <TaskButton label="Steam" state="running">
        <SteamArt className="h-[23px] w-[23px]" />
      </TaskButton>
      <TaskButton label="Windows-Sicherheit" state="active">
        <svg width="17" height="18" viewBox="0 0 17 18" fill="#fff" aria-hidden="true">
          <path d="M8 0v8H0V3c4 0 5-1 8-3ZM9 0v8h8V3c-4 0-5-1-8-3ZM0.200 9H8v9C3 15.500 1 13 0.200 9ZM16.800 9H9v9c5-2.500 7-5 7.800-9Z" />
        </svg>
      </TaskButton>
    </div>
    <div className="ml-auto flex items-center text-white">
      <button aria-label="Ausgeblendete Symbole" className="flex w-6 justify-center">
        <svg width="12" height="8" fill="none" stroke="#fff" strokeWidth="1.300" aria-hidden="true">
          <path d="M0.500 7L6 1.500 11.500 7" />
        </svg>
      </button>
      <button aria-label="Netzwerk" className="flex w-6 justify-center">
        <svg width="16" height="14" fill="none" stroke="#fff" aria-hidden="true">
          <path d="M5 2.500h10.500v7H3.500V5M10 9.500v3M6 12.500h8M0.500 0.500h4v4h-4ZM2.500 4v9.500h1.500" />
        </svg>
      </button>
      <button aria-label="Lautstärke" className="flex w-6 justify-center">
        <svg width="17" height="14" fill="none" stroke="#fff" aria-hidden="true">
          <path d="M0.500 4.500h2l3.500-3.500v12l-3.500-3.500h-2ZM8 5c1 1 1 3 0 4M10.500 3c2 2 2 6 0 8M13 1c3 3 3 9 0 12" />
        </svg>
      </button>
      <button className="flex w-[66px] flex-col items-center text-[11px] leading-[18px]">
        <span>10:29</span>
        <span>26.01.2020</span>
      </button>
      <button aria-label="Benachrichtigungen" className="relative flex h-10 w-12 items-center pl-3">
        <svg width="16" height="17" viewBox="0 0 16 17" aria-hidden="true">
          <path d="M0 0h16v13H8l-4 4v-4H0Z" fill="#fff" />
          <path d="M3 3.500h10M3 6.500h10M3 9.500h7" stroke="#1a2740" />
        </svg>
        <span className="absolute bottom-1 right-3 flex h-[17px] w-[17px] items-center justify-center rounded-full border border-[#8a8f98] bg-[#2b2f38] text-[11px] font-semibold leading-none">
          1
        </span>
      </button>
      <button aria-label="Desktop anzeigen" className="h-10 w-[5px] border-l border-[#6f7888]" />
    </div>
  </footer>
);

const App: React.FC = () => (
  <div className="relative h-screen w-full overflow-hidden bg-[#0084f4] font-['Open_Sans',sans-serif]">
    <Wallpaper />
    <DesktopIcon label="Dieser PC" position="left-[10px] top-2" shortcut>
      <FolderArt />
    </DesktopIcon>
    <DesktopIcon label="Papierkorb" position="left-[10px] top-[106px]">
      <BinArt />
    </DesktopIcon>
    <DesktopIcon label="Command and Conquer 3 Kan..." position="right-[250px] top-[106px]" shortcut>
      <ScorpionArt />
    </DesktopIcon>
    <DesktopIcon label="Steam" position="right-[18px] top-[792px]" shortcut>
      <SteamArt />
    </DesktopIcon>
    <DesktopIcon label="Origin" position="right-[18px] top-[890px]" shortcut>
      <OriginArt />
    </DesktopIcon>
    <DesktopIcon label="CCleaner" position="right-[133px] top-[1282px]" shortcut>
      <CCleanerArt />
    </DesktopIcon>
    <DesktopIcon label="Tools" position="right-[18px] top-[1282px]">
      <ToolsArt />
    </DesktopIcon>
    <SteamWindow />
    <SecurityWindow />
    <Taskbar />
  </div>
);

export default App;
